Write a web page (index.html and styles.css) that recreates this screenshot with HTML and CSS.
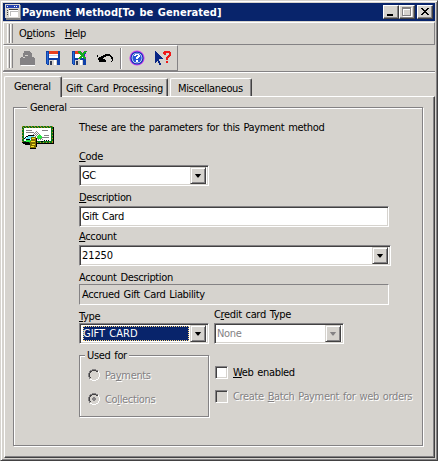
FILE: index.html
```
<!DOCTYPE html>
<html lang="en">
<head>
<meta charset="utf-8">
<title>Payment Method[To be Generated]</title>
<link rel="stylesheet" href="styles.css">
</head>
<body>
<div class="window">
  <header class="titlebar">
    <svg class="app-icon" width="16" height="16" shape-rendering="crispEdges"><path fill="#808080" d="M1 1h15v15H1z"/><path fill="#d6d3ce" d="M0 0h15v14H0z"/><path fill="#2442b0" d="M1 1h13v3H1z"/><path fill="#fff" d="M2 2h1v1H2zM9 2h1v1H9zM11 2h1v1h-1zM4 6h9v7H4z"/><path fill="#404040" d="M2 6h1v1H2zM2 8h1v1H2zM2 10h1v1H2zM4 5h9v1H4z"/><path fill="#bdbdbd" d="M5 7h8v5H5z"/><path fill="#fff" d="M6 8h7v4H6z"/></svg>
    <h1>Payment Method[To be Generated]</h1>
    <div class="controls">
      <button class="ctl" aria-label="Minimize"><svg width="12" height="10" shape-rendering="crispEdges"><path d="M2 7h6v2H2z"/></svg></button>
      <button class="ctl" aria-label="Maximize"><svg width="12" height="10" shape-rendering="crispEdges"><path fill="#fff" d="M2 1h9v9H2z"/><path fill="#848284" d="M1 0h9v9H1z"/><path fill="#d6d3ce" d="M2 2h7v6H2z"/><path fill="#fff" d="M2 2h7v1H2zM2 2h1v6H2z"/></svg></button>
      <button class="ctl close" aria-label="Close"><svg width="12" height="10" shape-rendering="crispEdges"><path d="M2 1h2v1H2zM8 1h2v1H8zM3 2h2v1H3zM7 2h2v1H7zM4 3h4v1H4zM5 4h2v1H5zM4 5h4v1H4zM3 6h2v1H3zM7 6h2v1H7zM2 7h2v1H2zM8 7h2v1H8z"/></svg></button>
    </div>
  </header>
  <nav class="menubar"><i class="grip"></i><i class="grip"></i><span class="m1">O<u>p</u>tions</span><span class="m2"><u>H</u>elp</span></nav>
  <div class="toolrow">
    <div class="toolbar">
      <i class="grip"></i><i class="grip"></i>
      <svg width="164" height="22" viewBox="13 47 164 22" shape-rendering="crispEdges">
        <path fill="#fff" d="M21 64h14v2H21z"/>
        <path fill="#848284" d="M24 51h6v1h1v1h1v4h2v1h1v7H20v-7h1v-1h2v-4h1z"/><path fill="#d6d3ce" d="M25 55h3v1h-3zM23 57h2v1h-2z"/>
        <path fill="#1040a8" d="M46 51h14v14H47v-1h-1z"/><path fill="#2870d8" d="M47 52h1v12h-1z"/><path fill="#e84020" d="M49 51h9v3h-9z"/><path fill="#fff" d="M49 54h9v4h-9z"/><path fill="#c8d8f0" d="M49 55h9v1h-9z"/><path fill="#d6d3ce" d="M49 60h8v5h-8z"/><path fill="#303850" d="M50 61h2v4h-2z"/><path fill="#fff" d="M54 60h2v5h-2z"/>
        <path fill="#1040a8" d="M72 51h14v14H73v-1h-1z"/><path fill="#2870d8" d="M73 52h1v12h-1z"/><path fill="#e84020" d="M75 51h5v3h-5z"/><path fill="#fff" d="M75 54h9v4h-9z"/><path fill="#d6d3ce" d="M75 60h8v5h-8z"/><path fill="#303850" d="M76 61h2v4h-2z"/><path fill="#fff" d="M80 60h2v5h-2z"/>
        <path fill="#f0a8e8" d="M77 50h3v1h-3zM85 50h2v2h-2zM86 57h1v2h-1zM78 59h2v1h-2zM81 51h4v2h-4zM85 54h2v3h-2z"/><path fill="#18a820" d="M78 51h3v1h1v1h1v-1h1v-1h3v1h-1v1h-1v1h-1v2h1v1h1v2h-2v-1h-1v-1h-1v1h-1v1h-3v-1h1v-1h1v-1h1v-1h-1v-1h-1v-1h-1z"/>
        <path d="M97 55h1v3h1v-1h2v-1h2v-1h2v-1h5v1h1v1h1v1h1v4h-1v1h-1v-1h1v-2h-1v-2h-1v-1h-4v1h-2v1h-1v1h2v1h1v2h-7z"/>
        <path fill="#848284" d="M120 48h1v21h-1z"/><path fill="#fff" d="M121 48h1v21h-1z"/>
        <g shape-rendering="auto"><circle cx="137" cy="58" r="7.6" fill="#d040f0"/><circle cx="137" cy="58" r="6.6" fill="#1438b8"/><circle cx="137" cy="58" r="5.3" fill="#fff"/><circle cx="137" cy="58" r="4.7" fill="#2858d8"/></g>
        <path fill="#fff" d="M135 54h4v1h1v2h-1v1h-1v1h-2v-2h1v-1h1v-1h-2v1h-2v-1h1zM136 60h2v2h-2z"/>
        <path fill="#082484" d="M155 51h1v1h1v1h1v1h1v1h1v1h1v1h1v1h1v1h-4v2h1v2h1v2h-2v-2h-1v-2h-1v1h-1v1h-1z"/>
        <path fill="#f01818" d="M163 52h1v-1h6v1h1v4h-1v1h-1v1h-1v2h-2v-3h1v-1h1v-1h1v-2h-3v2h-2zM166 61h2v2h-2z"/>
      </svg>
    </div>
  </div>
  <div class="tabs">
    <div class="tab active">General</div>
    <div class="tab t2">Gift Card Processing</div>
    <div class="tab t3">Miscellaneous</div>
  </div>
  <main class="page">
    <fieldset class="group main-group">
      <legend>General</legend>
      <div class="content">
        <svg class="card-icon" width="33" height="24" shape-rendering="crispEdges">
          <path d="M1 1h31v17H1z"/><path fill="#087818" d="M0 0h31v17H0z"/><path fill="none" stroke="#b88818" stroke-dasharray="1 2" d="M0 .5h31M30.5 0v17M0 16.500h31M.5 0v17M1 1.500h30"/><path fill="#fff" d="M2 2h27v13H2z"/>
          <path fill="#848284" d="M4 4h6v1H4zM4 6h8v1H4zM20 4h6v1h-6zM20 11h7v1h-7zM22 9h5v1h-5zM4 10h4v1H4z"/>
          <path fill="none" stroke="#848284" stroke-dasharray="1 1" d="M14 5.500h2M13 6.500h4M12 7.500h6M11 8.500h8M10 9.500h10M11 10.500h8M13 12.500h8M14 13.500h7"/>
          <path fill="#68e8f8" d="M5 10h7v3H3v-1h2z"/><path d="M6 9h6v1H6zM4 10h2v1H4zM3 11h1v1H3zM2 12h1v1H2zM4 13h4v1H4zM0 16h7v1H0zM3 18h5v1H3zM19 15h2v1h-2zM22 14h1v1h-1zM24 14h1v1h-1zM26 14h1v1h-1z"/>
          <path fill="#28e840" d="M16 9h3v1h1v2h-1v1h-3v-1h-1v-2h1zM4 14h5v2H4z"/><path fill="#807000" d="M9 11h5v11H8v-7h1z"/><path fill="#f8e020" d="M10 12h3v1h-3zM9 15h4v1H9zM10 18h3v1h-3zM9 20h3v1H9z"/><path d="M14 12h1v9h-1zM8 22h6v1H8z"/>
        </svg>
        <div class="form">
          <p class="intro">These are the parameters for this Payment method</p>
          <label class="lb-code"><u>C</u>ode</label>
          <div class="box combo short"><span>GC</span><b class="drop"></b></div>
          <label class="lb-desc"><u>D</u>escription</label>
          <div class="box text"><span>Gift Card</span></div>
          <label class="lb-acct"><u>A</u>ccount</label>
          <div class="box combo long"><span class="num">21250</span><b class="drop"></b></div>
          <label class="lb-ad">Account Description</label>
          <div class="box readonly"><span>Accrued Gift Card Liability</span></div>
          <div class="cols">
            <div class="col">
              <label class="lb-type"><u>T</u>ype</label>
              <div class="box combo short"><span class="selected">GIFT CARD</span><b class="drop"></b></div>
              <fieldset class="group used">
                <legend>Used for</legend>
                <div class="option r1"><svg width="13" height="13"><use href="#radio"/></svg><span class="dis">Pa<u>y</u>ments</span></div>
                <div class="option"><svg width="13" height="13"><use href="#radio"/><path shape-rendering="crispEdges" fill="#848284" d="M5 4h2v1h1v2H7v1H5V7H4V5h1z"/></svg><span class="dis">Co<u>l</u>lections</span></div>
              </fieldset>
            </div>
            <div class="col right">
              <label class="lb-cc">C<u>r</u>edit card Type</label>
              <div class="box combo short off"><span>None</span><b class="drop"></b></div>
              <div class="option c1"><i class="check"></i><span><u>W</u>eb enabled</span></div>
              <div class="option c2"><i class="check gray"></i><span class="dis">Create <u>B</u>atch Payment for web orders</span></div>
            </div>
          </div>
        </div>
      </div>
    </fieldset>
  </main>
</div>
<svg width="0" height="0" class="defs"><defs><g id="radio" shape-rendering="crispEdges"><path fill="#848284" d="M4 0h4v1H4zM2 1h2v1H2zM8 1h2v1H8zM1 2h1v2H1zM0 4h1v4H0zM1 8h1v2H1z"/><path fill="#424142" d="M4 1h4v1H4zM2 2h2v1H2zM8 2h2v1H8zM2 3h1v1H2zM1 4h1v4H1zM2 8h1v1H2z"/><path fill="#fff" d="M10 2h1v2h-1zM11 4h1v4h-1zM10 8h1v2h-1zM8 10h2v1H8zM4 11h4v1H4zM2 10h2v1H2z"/></g></defs></svg>
</body>
</html>
```
FILE: styles.css
```
* { box-sizing: border-box; }
body { margin: 0; overflow: hidden; font: 11px/13px "DejaVu Sans Condensed", "DejaVu Sans", sans-serif; font-stretch: condensed; letter-spacing: -0.35px; word-spacing: 1.1px; color: #000; background: #d6d3ce; }
svg { display: block; flex: none; }
.defs { position: absolute; }
label, p { display: block; margin: 0; white-space: nowrap; height: 13px; }
u { text-decoration: underline; text-decoration-thickness: 1px; text-underline-offset: 1px; text-decoration-skip-ink: none; }
.window { width: 438px; height: 461px; padding: 2px 1px 1px 2px; border: 1px solid #d6d3ce; border-right-color: #424142; border-bottom-color: #424142; box-shadow: inset 1px 1px #fff, inset -1px -1px #848284; display: flex; flex-direction: column; }
.titlebar { width: 432px; height: 18px; flex: none; background: #08246b; color: #fff; display: flex; align-items: center; padding-left: 2px; }
h1 { margin: 0 0 0 1px; font-size: 11px; line-height: 13px; letter-spacing: 0.05px; white-space: nowrap; }
.controls { display: flex; margin-left: auto; margin-right: 2px; }
.ctl { width: 16px; height: 14px; padding: 1px; border: 1px solid; border-color: #fff #424142 #424142 #fff; box-shadow: inset -1px -1px #848284; background: #d6d3ce; }
.close { margin-left: 2px; }
.menubar { width: 432px; height: 23px; margin-top: 1px; flex: none; border: 1px solid; border-color: #fff #848284 #848284 #fff; display: flex; align-items: center; padding-left: 3px; }
.grip { width: 3px; height: 19px; border-left: 1px solid #fff; border-right: 1px solid #848284; flex: none; }
.m1 { margin-left: 6px; }
.m2 { margin-left: 10px; }
.toolrow { width: 432px; height: 28px; flex: none; border-bottom: 1px solid #fff; box-shadow: inset 0 -1px #848284; }
.toolbar { width: 175px; height: 26px; border: 1px solid; border-color: #fff #848284 #848284 #fff; display: flex; align-items: center; padding-left: 3px; overflow: hidden; }
.tabs { height: 20px; margin-top: 3px; flex: none; display: flex; align-items: flex-end; padding-left: 1px; }
.tab { height: 18px; border-top: 1px solid #fff; border-right: 1px solid #424142; box-shadow: inset -1px 0 #848284; border-radius: 2px 2px 0 0; padding: 3px 0 0 4px; white-space: nowrap; }
.tab.active { width: 58px; height: 21px; border-left: 1px solid #fff; padding: 3px 0 0 9px; margin-bottom: -1px; background: #d6d3ce; position: relative; }
.t2 { width: 106px; letter-spacing: -0.25px; }
.t3 { width: 82px; margin-left: 2px; border-left: 1px solid #fff; padding-left: 7px; }
.page { width: 431px; height: 362px; margin-left: 1px; flex: none; padding: 4px 10px 0 8px; border: 1px solid; border-color: #fff #424142 #424142 #fff; box-shadow: inset -1px -1px #848284; }
.group { margin: 0; padding: 0; min-width: 0; border: 1px solid #848284; box-shadow: 1px 1px #fff, inset 1px 1px #fff; }
.group legend { padding: 0 3px; height: 13px; background: #d6d3ce; }
.main-group { width: 410px; height: 345px; }
.main-group > legend { margin-left: 13px; }
.content { display: flex; padding-left: 8px; }
.card-icon { margin-top: 12px; }
.form { margin-left: 24px; width: 320px; display: flex; flex-direction: column; padding-top: 7px; }
.box { height: 21px; background: #fff; border: 1px solid; border-color: #848284 #fff #fff #848284; box-shadow: inset 1px 1px #424142, inset -1px -1px #d6d3ce; padding: 2px; display: flex; align-items: center; flex: none; }
.box span { flex: 1; white-space: nowrap; }
.short { width: 130px; }
.long { width: 312px; }
.text, .readonly { width: 310px; }
.readonly { background: #d6d3ce; box-shadow: none; }
.num { letter-spacing: -0.1px; }
.drop { width: 16px; height: 17px; background: #d6d3ce; border: 1px solid; border-color: #d6d3ce #424142 #424142 #d6d3ce; box-shadow: inset 1px 1px #fff, inset -1px -1px #848284; display: flex; align-items: center; justify-content: center; }
.drop::before { content: ""; width: 7px; height: 4px; background: currentColor; clip-path: polygon(0 0, 100% 0, 57% 100%, 43% 100%); }
.off { color: #848284; }
.selected { background: #08246b; color: #fff; outline: 1px dotted #ffdb84; outline-offset: -1px; height: 15px; margin: 0 1px; line-height: 15px; letter-spacing: 0; }
.lb-code { margin-top: 16px; margin-bottom: 2px; }
.lb-desc { margin-top: 5px; margin-bottom: 2px; }
.lb-acct { margin-top: 3px; margin-bottom: 2px; }
.lb-ad { margin-top: 5px; }
.cols { display: flex; margin-top: 5px; }
.col { width: 130px; }
.right { margin-left: 5px; width: 210px; }
.lb-cc { margin-top: -2px; margin-bottom: 2px; }
.used { width: 130px; height: 68px; margin-top: 5px; }
.used legend { margin-left: 5px; padding: 0 2px; }
.option { display: flex; align-items: center; height: 13px; white-space: nowrap; }
.used .option { margin: 11px 0 0 8px; }
.used .r1 { margin-top: 7px; }
.used span { margin-left: 4px; }
.dis { color: #848284; text-shadow: 1px 1px #fff; }
.check { width: 13px; height: 13px; background: #fff; border: 1px solid; border-color: #848284 #fff #fff #848284; box-shadow: inset 1px 1px #424142, inset -1px -1px #d6d3ce; }
.gray { background: #d6d3ce; }
.c1 { margin: 22px 0 0 1px; }
.c2 { margin: 11px 0 0 1px; }
.right .option span { margin-left: 5px; }
```
